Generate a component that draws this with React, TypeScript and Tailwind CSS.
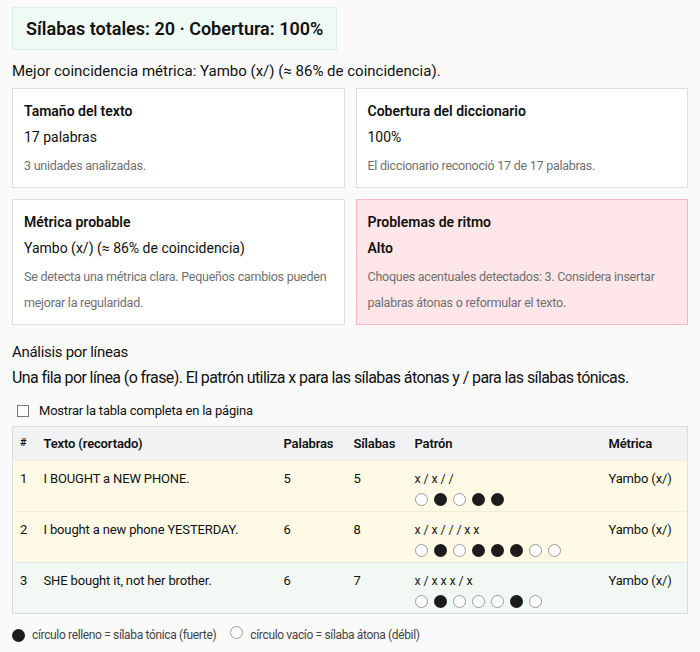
import React from "react";

type Row = {
  n: number;
  text: string;
  words: number;
  syllables: number;
  pattern: string;
  stress: number[];
  meter: string;
  tone: "warn" | "ok";
};

const rows: Row[] = [
  { n: 1, text: "I BOUGHT a NEW PHONE.", words: 5, syllables: 5, pattern: "x / x / /", stress: [0, 1, 0, 1, 1], meter: "Yambo (x/)", tone: "warn" },
  { n: 2, text: "I bought a new phone YESTERDAY.", words: 6, syllables: 8, pattern: "x / x / / / x x", stress: [0, 1, 0, 1, 1, 1, 0, 0], meter: "Yambo (x/)", tone: "warn" },
  { n: 3, text: "SHE bought it, not her brother.", words: 6, syllables: 7, pattern: "x / x x x / x", stress: [0, 1, 0, 0, 0, 1, 0], meter: "Yambo (x/)", tone: "ok" },
];

function Dot({ on }: { on: boolean }) {
  return on ? (
    <span className="inline-block h-[13px] w-[13px] rounded-full bg-[#1c1c1c]" />
  ) : (
    <span className="inline-block h-[13px] w-[13px] rounded-full border border-[#9a9a9a] bg-white" />
  );
}

function Card({
  title,
  value,
  note,
  danger,
  boldValue,
}: {
  title: string;
  value: string;
  note: string;
  danger?: boolean;
  boldValue?: boolean;
}) {
  return (
    <div
      className={
        danger
          ? "border border-[#f2b8bd] bg-[#ffe6e8] px-[11px] pt-3 pb-2"
          : "border border-[#dedede] bg-white px-[11px] pt-3 pb-2"
      }
    >
      <div className="text-[14px] font-semibold leading-5 text-[#111]">{title}</div>
      <div className={boldValue ? "mt-[6px] text-[14px] font-semibold leading-5 text-[#111]" : "mt-[6px] text-[14px] leading-5 text-[#111]"}>
        {value}
      </div>
      <div className="mt-[6px] text-[12.5px] leading-[26px] tracking-[-0.25px] text-[#707070]">{note}</div>
    </div>
  );
}

export default function App() {
  return (
    <div
      className="min-h-[652px] w-[700px] bg-[#fafafa] px-3 pt-[7px] text-[#111]"
      style={{ fontFamily: 'Roboto, "Noto Sans", sans-serif' }}
    >
      <div className="inline-flex h-[43px] items-center whitespace-nowrap border border-[#d9efe1] bg-[#f0faf4] px-[13px] text-[18px] font-semibold">
        Sílabas totales: 20 · Cobertura: 100%
      </div>

      <p className="mt-[10px] text-[15px] leading-[22px]">
        Mejor coincidencia métrica: Yambo (x/) (≈ 86% de coincidencia).
      </p>

      <div className="mt-[6px] grid grid-cols-2 gap-[11px]">
        <Card title="Tamaño del texto" value="17 palabras" note="3 unidades analizadas." />
        <Card title="Cobertura del diccionario" value="100%" note="El diccionario reconoció 17 de 17 palabras." />
        <Card
          title="Métrica probable"
          value="Yambo (x/) (≈ 86% de coincidencia)"
          note="Se detecta una métrica clara. Pequeños cambios pueden mejorar la regularidad."
        />
        <Card
          title="Problemas de ritmo"
          value="Alto"
          boldValue
          danger
          note="Choques acentuales detectados: 3. Considera insertar palabras átonas o reformular el texto."
        />
      </div>

      <h2 className="mt-[16px] text-[15px] font-normal leading-[22px] tracking-[-0.3px]">Análisis por líneas</h2>
      <p className="mt-[4px] whitespace-nowrap text-[16px] leading-[22px] tracking-[-0.6px]">
        Una fila por línea (o frase). El patrón utiliza x para las sílabas átonas y / para las sílabas tónicas.
      </p>

      <label className="mt-[12px] flex items-center gap-[10px] pl-[5px] text-[13px] leading-5 tracking-[-0.2px]">
        <span className="inline-block h-[12px] w-[12px] border border-[#777] bg-white" />
        Mostrar la tabla completa en la página
      </label>

      <table className="mt-[5px] w-[675px] table-fixed border-collapse border border-[#dcdcdc] text-[13px] tracking-[-0.15px]">
        <colgroup>
          <col className="w-[23px]" />
          <col className="w-[240px]" />
          <col className="w-[70px]" />
          <col className="w-[61px]" />
          <col className="w-[194px]" />
          <col className="w-[87px]" />
        </colgroup>
        <thead>
          <tr className="h-[34px] bg-[#f2f2f4] text-left font-semibold">
            <th className="pl-[7px] text-[11px] font-semibold">#</th>
            <th className="pl-2 font-semibold">Texto (recortado)</th>
            <th className="pl-2 font-semibold">Palabras</th>
            <th className="pl-2 font-semibold">Sílabas</th>
            <th className="pl-2 font-semibold">Patrón</th>
            <th className="pl-2 font-semibold">Métrica</th>
          </tr>
        </thead>
        <tbody>
          {rows.map((r) => (
            <tr
              key={r.n}
              className={
                r.tone === "warn"
                  ? "border-t border-[#f0ecda] bg-[#fefae6] align-top"
                  : "border-t border-[#e3ebe6] bg-[#f2f9f5] align-top"
              }
            >
              <td className="pl-[7px] pt-2 leading-5">{r.n}</td>
              <td className="pl-2 pt-2 leading-5">{r.text}</td>
              <td className="pl-2 pt-2 leading-5">{r.words}</td>
              <td className="pl-2 pt-2 leading-5">{r.syllables}</td>
              <td className="pl-2 pt-2 pb-[5px]">
                <div className="text-[12.5px] leading-5 whitespace-pre text-[#222]">{r.pattern}</div>
                <div className="mt-[4px] flex gap-[6px]">
                  {r.stress.map((s, i) => (
                    <Dot key={i} on={s === 1} />
                  ))}
                </div>
              </td>
              <td className="pl-2 pt-2 leading-5">{r.meter}</td>
            </tr>
          ))}
        </tbody>
      </table>

      <div className="mt-[11px] flex items-center text-[12px] leading-5 tracking-[-0.35px] text-[#444]">
        <Dot on />
        <span className="ml-[7px]">círculo relleno = sílaba tónica (fuerte)</span>
        <span className="ml-[14px]">
          <Dot on={false} />
        </span>
        <span className="ml-[7px]">círculo vacío = sílaba átona (débil)</span>
      </div>
    </div>
  );
}
